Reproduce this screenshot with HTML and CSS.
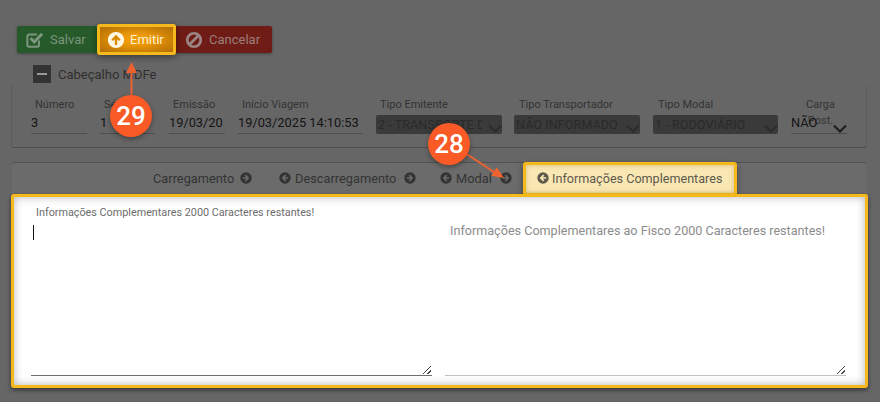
FILE: index.html
```html
<!DOCTYPE html>
<html lang="pt-BR">
<head>
  <meta charset="UTF-8" />
  <title>MDFe</title>
  <link rel="stylesheet" href="styles.css">
</head>
<body>
  <div class="toolbar">
    <button class="btn btn-save">
      <svg class="ico" viewBox="0 0 20 20"><path d="M14.500 10.500V15.500a2 2 0 0 1-2 2H3.500a2 2 0 0 1-2-2V6a2 2 0 0 1 2-2H12" fill="none" stroke="#7d967e" stroke-width="2.200"/><path d="M5 8l4.200 4.200L18 3" fill="none" stroke="#7d967e" stroke-width="3.200"/></svg>
      Salvar
    </button>
    <button class="btn btn-emit">
      <svg class="ico" viewBox="0 0 20 20"><circle cx="10" cy="10" r="9" fill="#fff6e4"/><path d="M10 15.500V6.500M5.800 10.300L10 6 14.200 10.300" fill="none" stroke="#d98a00" stroke-width="2.600"/></svg>
      Emitir
    </button>
    <button class="btn btn-cancel">
      <svg class="ico" viewBox="0 0 20 20"><circle cx="10" cy="10" r="7.500" fill="none" stroke="#9a8583" stroke-width="3"/><path d="M15.300 4.700L4.700 15.300" stroke="#9a8583" stroke-width="3"/></svg>
      Cancelar
    </button>
  </div>

  <div class="section-title">
    <span class="collapse-box"><i></i></span>
    <span>Cabeçalho MDFe</span>
  </div>

  <div class="header-card">
    <div class="field f-numero"><label>Número</label><div class="value">3</div></div>
    <div class="field f-serie"><label>Série</label><div class="value">1</div></div>
    <div class="field f-emissao"><label>Emissão</label><div class="value">19/03/20</div></div>
    <div class="field f-inicio"><label>Início Viagem</label><div class="value">19/03/2025 14:10:53</div></div>
    <div class="field f-emitente"><label>Tipo Emitente</label><div class="select"><span class="sel-txt">2 - TRANSPORTE DE</span><svg class="chev" viewBox="0 0 14 9"><path d="M1 1.500l6 6 6-6" fill="none" stroke="#2c2c2c" stroke-width="2"/></svg></div></div>
    <div class="field f-transp"><label>Tipo Transportador</label><div class="select"><span class="sel-txt">NÃO INFORMADO</span><svg class="chev" viewBox="0 0 14 9"><path d="M1 1.500l6 6 6-6" fill="none" stroke="#2c2c2c" stroke-width="2"/></svg></div></div>
    <div class="field f-modal"><label>Tipo Modal</label><div class="select"><span class="sel-txt">1 - RODOVIÁRIO</span><svg class="chev" viewBox="0 0 14 9"><path d="M1 1.500l6 6 6-6" fill="none" stroke="#2c2c2c" stroke-width="2"/></svg></div></div>
    <div class="field f-carga">
      <label>Carga<br>Post.</label>
      <div class="value">NÃO<svg class="chev" viewBox="0 0 14 9"><path d="M1 1.500l6 6 6-6" fill="none" stroke="#1e1e1e" stroke-width="2.200"/></svg></div>
    </div>
  </div>

  <div class="tabs-panel">
    <div class="tabs">
      <span class="tab">Carregamento <svg class="dir" viewBox="0 0 12 12"><use href="#seta-dir"/></svg></span>
      <span class="tab"><svg class="dir" viewBox="0 0 12 12"><use href="#seta-esq"/></svg> Descarregamento <svg class="dir" viewBox="0 0 12 12"><use href="#seta-dir"/></svg></span>
      <span class="tab"><svg class="dir" viewBox="0 0 12 12"><use href="#seta-esq"/></svg> Modal <svg class="dir" viewBox="0 0 12 12"><use href="#seta-dir"/></svg></span>
      <span class="tab tab-active"><svg class="dir" viewBox="0 0 12 12"><use href="#seta-esq"/></svg> Informações Complementares</span>
    </div>
    <div class="tab-content">
      <div class="text-col">
        <div class="text-label">Informações Complementares 2000 Caracteres restantes!</div>
        <div class="text-area text-area-focus"><span class="caret"></span><span class="grip"></span></div>
      </div>
      <div class="text-col">
        <div class="text-label text-label-big">Informações Complementares ao Fisco 2000 Caracteres restantes!</div>
        <div class="text-area text-area-right"><span class="grip"></span></div>
      </div>
    </div>
  </div>

  <!-- marcadores do tutorial -->
  <svg class="arrows" viewBox="0 0 880 402">
    <path d="M131.500 100V68" stroke="#ee6230" stroke-width="2"/>
    <path d="M131.500 62l-5.500 11h11z" fill="#ee6230"/>
    <path d="M465 153l32 21" stroke="#ee6230" stroke-width="2"/>
    <path d="M504 178l-12.700-2.300 5.400-8.400z" fill="#ee6230"/>
  </svg>
  <span class="badge badge-29">29</span>
  <span class="badge badge-28">28</span>

  <svg class="defs" width="0" height="0">
    <defs>
      <g id="seta-dir"><circle cx="6" cy="6" r="5.700" fill="currentColor"/><path d="M2.800 6h5M5.300 3.200L8.100 6 5.300 8.800" fill="none" stroke="var(--seta-bg)" stroke-width="1.700"/></g>
      <g id="seta-esq"><circle cx="6" cy="6" r="5.700" fill="currentColor"/><path d="M9.200 6h-5M6.700 3.200L3.900 6l2.800 2.800" fill="none" stroke="var(--seta-bg)" stroke-width="1.700"/></g>
    </defs>
  </svg>
</body>
</html>
```

FILE: styles.css
```css
html, body {
  height: 100%;
}
body {
  margin: 0;
  width: 880px;
  height: 402px;
  overflow: hidden;
  position: relative;
  box-sizing: border-box;
  padding: 26px 0 0 0;
  background-color: #666666;
  font-family: Roboto, "Liberation Sans", sans-serif;
  color: #2b2b2b;
}

.toolbar {
  display: flex;
  margin-left: 17px;
  height: 27px;
}
.btn {
  display: flex;
  align-items: center;
  gap: 6px;
  border: none;
  height: 27px;
  padding: 0 0 0 9px;
  font-family: inherit;
  font-size: 13px;
  box-shadow: 0 1px 3px rgba(0,0,0,0.35);
}
.ico {
  width: 18px;
  height: 18px;
}
.btn-save {
  width: 80px;
  background-color: #275a2a;
  color: #7a957b;
  border-radius: 2px 0 0 2px;
}
.btn-emit {
  position: relative;
  z-index: 2;
  width: 79px;
  height: 31px;
  margin-top: -2px;
  box-sizing: border-box;
  padding-left: 7px;
  gap: 5px;
  border: 3px solid #f6b91c;
  border-radius: 3px;
  background: radial-gradient(ellipse at center, #f09c08 25%, #b06c05 100%);
  color: #fff0d2;
  box-shadow: 0 2px 6px rgba(0,0,0,0.45);
}
.btn-cancel {
  width: 96px;
  background-color: #701c16;
  color: #9a7f7b;
  border-radius: 0 2px 2px 0;
}

.section-title {
  display: flex;
  align-items: center;
  gap: 7px;
  margin: 12px 0 0 33px;
  height: 18px;
  font-size: 13px;
  color: #2f2f2f;
}
.collapse-box {
  display: flex;
  align-items: center;
  justify-content: center;
  width: 18px;
  height: 18px;
  background-color: #333333;
}
.collapse-box i {
  width: 10px;
  height: 2px;
  background-color: #9a9a9a;
}

.header-card {
  display: flex;
  height: 63px;
  width: 856px;
  margin: 2px 0 0 11px;
  box-sizing: border-box;
  border-left: 1px solid #5c5c5c;
  border-bottom: 1px solid #4f4f4f;
  border-right: 1px solid #5c5c5c;
  border-radius: 0 0 3px 3px;
  padding-top: 12px;
}
.field {
  flex: none;
  font-size: 11px;
  color: #333333;
}
.field label {
  display: block;
  height: 15px;
  line-height: 15px;
  padding-left: 4px;
  white-space: nowrap;
}
.value {
  position: relative;
  height: 21px;
  line-height: 22px;
  font-size: 12.8px;
  color: #141414;
  border-bottom: 1px solid #4e4e4e;
  white-space: nowrap;
  overflow: hidden;
}
.select {
  position: relative;
  height: 19px;
  line-height: 19px;
  margin-top: 3px;
  padding-left: 2px;
  font-size: 12.7px;
  color: #2a2a2a;
  background-color: #3a3a3a;
  border-radius: 2px;
}
.sel-txt {
  display: block;
  width: 104px;
  overflow: hidden;
  white-space: nowrap;
}
.chev {
  position: absolute;
  right: 0;
  bottom: 1px;
  width: 14px;
  height: 9px;
}
.f-numero { width: 56px; margin-left: 19px; }
.f-serie { width: 55px; margin-left: 13px; }
.f-emissao { width: 56px; margin-left: 14px; }
.f-inicio { width: 125px; margin-left: 13px; }
.f-emitente { width: 126px; margin-left: 13px; }
.f-transp { width: 126px; margin-left: 12px; }
.f-transp label, .f-modal label { padding-left: 5px; }
.f-modal { width: 125px; margin-left: 13px; }
.f-carga { width: 56px; margin-left: 13px; position: relative; }
.f-carga label {
  text-align: center;
  padding-left: 3px;
  line-height: 16px;
  height: 15px;
}
.f-carga .value {
  overflow: visible;
}
.f-carga .chev {
  right: 0;
  bottom: 0;
}

.tabs-panel {
  position: relative;
  width: 855px;
  margin: 14px 0 0 12px;
  height: 227px;
  border-radius: 3px 3px 0 0;
  border-top: 1px solid #535353;
  background-color: #6b6b6b;
  box-sizing: border-box;
}
.tabs {
  display: flex;
  align-items: center;
  height: 30px;
  padding-left: 141px;
  font-size: 12.8px;
  color: #333333;
  --seta-bg: #6a6a6a;
}
.tab {
  display: flex;
  align-items: center;
  gap: 3px;
  white-space: nowrap;
}
.tab:nth-child(1) { width: 126px; gap: 6px; }
.tab:nth-child(2) { width: 161px; gap: 4px; }
.tab:nth-child(2) .dir:last-child { margin-left: 4px; }
.tab:nth-child(3) { width: 83px; gap: 4px; }
.tab:nth-child(3) .dir:last-child { margin-left: 4px; }
.dir {
  width: 12px;
  height: 12px;
}
.tab-active {
  position: relative;
  z-index: 2;
  box-sizing: border-box;
  align-self: flex-start;
  width: 214px;
  height: 34px;
  margin-top: -1px;
  padding: 0 0 2px 11px;
  gap: 3px;
  font-size: 12.6px;
  border: 3px solid #f6b91c;
  border-radius: 3px 3px 0 0;
  background-color: #f9e7b4;
  color: #5e5a4c;
  --seta-bg: #f9e7b4;
  box-shadow: inset 0 0 5px rgba(150,110,20,0.35), 0 3px 6px rgba(0,0,0,0.4);
}
.tab-content {
  position: absolute;
  left: -1px;
  top: 31px;
  right: -1px;
  z-index: 3;
  height: 194px;
  box-sizing: border-box;
  display: flex;
  gap: 13px;
  padding: 0 0 9px 17px;
  background-color: #fff;
  border: 3px solid #f6b91c;
  border-radius: 3px;
  box-shadow: inset 0 0 8px rgba(0,0,0,0.3), 0 2px 4px rgba(0,0,0,0.5);
}
.text-col {
  flex: none;
  width: 401px;
  display: flex;
  flex-direction: column;
  min-width: 0;
}
.text-label {
  height: 28px;
  padding: 10px 0 0 5px;
  box-sizing: border-box;
  font-size: 10.8px;
  line-height: 12px;
  color: #6c6c6c;
  white-space: nowrap;
}
.text-label-big {
  padding: 28px 0 0 5px;
  font-size: 12.6px;
  color: #8c8c8c;
}
.text-area {
  position: relative;
  flex: 1;
  border-bottom: 1px solid #6e6e6e;
}
.text-area-right {
  border-bottom-color: #c2c0c6;
}
.caret {
  position: absolute;
  left: 2px;
  top: 0;
  width: 1px;
  height: 15px;
  background-color: #111;
}
.grip {
  position: absolute;
  right: 1px;
  bottom: 1px;
  width: 8px;
  height: 8px;
  background: linear-gradient(135deg, transparent 45%, #444 45%, #444 55%, transparent 55%, transparent 72%, #444 72%, #444 82%, transparent 82%);
}

.arrows {
  position: absolute;
  left: 0;
  top: 0;
  width: 880px;
  height: 402px;
  z-index: 5;
}
.badge {
  position: absolute;
  z-index: 6;
  width: 42px;
  height: 42px;
  border-radius: 50%;
  background-color: #fa5a25;
  color: #fff;
  font-size: 26px;
  font-weight: 500;
  line-height: 42px;
  text-align: center;
  box-shadow: 0 2px 5px rgba(0,0,0,0.35);
}
.badge-29 { left: 110px; top: 95px; }
.badge-28 { left: 428px; top: 123px; }
.defs {
  position: absolute;
}
```
